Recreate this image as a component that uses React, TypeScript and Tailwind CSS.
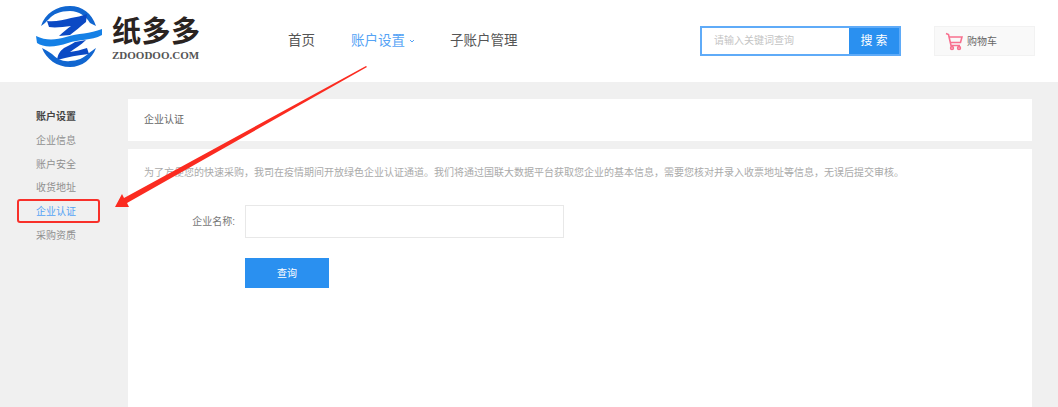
const sideItems = ['企业信息', '账户安全', '收货地址', '企业认证', '采购资质'];

function Logo() {
  return (
    <svg width="80" height="68" viewBox="0 0 80 68" className="shrink-0 self-start mt-[2px] ml-[30px]">
      <path d="M11 24C15 11 27 4 40 4C52 4 62 11 66 24L60 21C56 14 49 9 40 9C30 9 23 12 19 17C16 20 14 22 11 24Z" fill="#1166d0" />
      <path d="M17 19C25 20 33 18 41 16C46 15 52 14 57 12L56 20C50 25 45 29 40 33L29 34C33 30 37 27 41 24C33 25 25 26 19 25Z" fill="#0b49c4" />
      <path d="M6 34C16 39 26 38 36 35C48 31 60 32 72 27L72 33C61 39 49 37 38 41C26 45 14 46 7 41Z" fill="#1580e6" />
      <path d="M45 40L56 38C51 43 45 46 40 50C46 49 51 48 57 46L59 52C48 53 38 55 27 58C28 52 30 49 34 46C38 44 42 42 45 40Z" fill="#0b49c4" />
      <path d="M12 46C16 48 19 50 22 52C27 57 33 60 40 59C47 59 54 56 59 51C62 49 64 47 66 46C62 57 52 65 40 65C27 65 16 57 12 46Z" fill="#1166d0" />
    </svg>
  );
}

function Cart() {
  return (
    <svg width="18" height="20" viewBox="0 0 18 20" fill="none" stroke="#f7708f" strokeWidth="1.6" className="shrink-0">
      <path d="M1 2.5L3.5 3.5L6 14.5H15" />
      <path d="M4 6H17L15.5 11.5H5.2" />
      <circle cx="7" cy="17" r="1.4" />
      <circle cx="14" cy="17" r="1.4" />
    </svg>
  );
}

export default function App() {
  return (
    <div className="relative h-[407px] w-[1058px] overflow-hidden flex flex-col bg-[#f0f0f0] font-['Liberation_Sans','Noto_Sans_CJK_SC',sans-serif]">
      {/* Header */}
      <header className="h-[82px] shrink-0 bg-white flex items-center">
        <Logo />
        <div className="w-[176px] shrink-0 ml-[2px] self-start pt-[16px]">
          <div className="text-[29px] leading-[33px] font-bold text-[#2a2321] tracking-[0.5px]">纸多多</div>
          <div className="text-[11px] leading-[12px] font-bold font-['Liberation_Serif',serif] text-[#555]">ZDOODOO.COM</div>
        </div>
        <nav className="w-[412px] shrink-0 flex items-center text-[13.5px] text-[#555] leading-[20px]">
          <span className="w-[63px]">首页</span>
          <span className="text-[#55a3f5]">账户设置</span>
          <svg width="6" height="4" viewBox="0 0 6 4" fill="none" stroke="#55a3f5" className="ml-[4px] mr-[35px]">
            <path d="M1 1L3 3L5 1" />
          </svg>
          <span>子账户管理</span>
        </nav>
        <div className="w-[201px] h-[30px] shrink-0 flex border-2 border-[#5fabf8] bg-white">
          <div className="flex-1 pl-[12px] text-[10px] leading-[26px] text-[#c4c4c4]">请输入关键词查询</div>
          <button className="w-[50px] pl-[3px] bg-[#2a90f0] text-white text-[12px] leading-[26px] tracking-[3px]">搜索</button>
        </div>
        <div className="ml-[33px] w-[101px] h-[30px] shrink-0 flex items-center gap-[4px] pl-[10px] bg-[#f9f9f9] border border-[#f2f2f2] text-[10px] text-[#666]">
          <Cart />
          <span>购物车</span>
        </div>
      </header>

      <main className="flex-1 flex">
        {/* Sidebar */}
        <aside className="w-[128px] shrink-0 pt-[23px] pl-[36px] text-[10px] leading-[23.8px] text-[#8f8f8f]">
          <div className="font-bold text-[#444]">账户设置</div>
          {sideItems.map(item => (
            <div key={item} className={item === '企业认证' ? 'relative text-[#55a3f5]' : ''}>
              {item}
              {item === '企业认证' && (
                <div className="absolute left-[-19px] top-[-1px] w-[83px] h-[24px] border-2 border-[#f8302a] rounded-[3px]" />
              )}
            </div>
          ))}
        </aside>

        {/* Content */}
        <section className="w-[904px] shrink-0 pt-[17px] flex flex-col gap-[8px]">
          <div className="h-[42px] bg-white pl-[16px] text-[10px] leading-[42px] text-[#666]">企业认证</div>
          <div className="flex-1 bg-white px-[16px] pt-[16px]">
            <p className="text-[10px] leading-[16px] text-[#aaa] whitespace-nowrap">
              为了方便您的快速采购，我司在疫情期间开放绿色企业认证通道。我们将通过国联大数据平台获取您企业的基本信息，需要您核对并录入收票地址等信息，无误后提交审核。
            </p>
            <div className="mt-[24px] flex items-center">
              <label className="w-[91px] text-right text-[10px] text-[#777]">企业名称:</label>
              <input className="ml-[10px] w-[319px] h-[33px] border border-[#e8e8e8] bg-white" />
            </div>
            <button className="mt-[20px] ml-[101px] block w-[84px] h-[30px] bg-[#2a90f0] text-white text-[10px]">查询</button>
          </div>
        </section>
      </main>

      {/* Annotation arrow */}
      <svg width="1058" height="407" viewBox="0 0 1058 407" className="absolute inset-0 pointer-events-none">
        <polygon points="367,67 127,203 129,207 115,207 122,194 124,198 366,66" fill="#fb2b20" />
      </svg>
    </div>
  );
}
